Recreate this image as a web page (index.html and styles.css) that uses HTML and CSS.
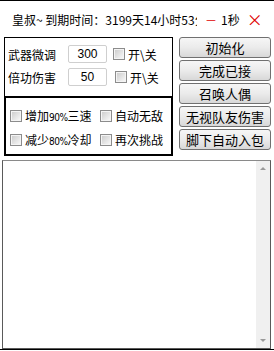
FILE: index.html
```html
<!DOCTYPE html>
<html lang="zh-CN">
<head>
    <meta charset="UTF-8">
    <title>皇叔</title>
    <link rel="stylesheet" href="styles.css">
</head>
<body>
    <div class="window">
        <header class="title-bar">
            <div class="title-text">皇叔~ 到期时间：3199天14小时53分</div>
            <span class="minus">－</span>
            <span class="timer">1秒</span>
            <span class="close">×</span>
        </header>

        <main class="content">
            <div class="left-col">
                <!-- number settings -->
                <div class="group group-top">
                    <div class="set-row">
                        <span class="label">武器微调</span>
                        <input class="num" type="text" value="300">
                        <span class="check"></span>
                        <span class="check-text">开\关</span>
                    </div>
                    <div class="set-row">
                        <span class="label">倍功伤害</span>
                        <input class="num" type="text" value="50">
                        <span class="check shift"></span>
                        <span class="check-text">开\关</span>
                    </div>
                </div>

                <!-- toggles -->
                <div class="group group-bottom">
                    <div class="opt-row">
                        <label class="opt wide"><span class="check"></span><span>增加<span class="small">90%</span>三速</span></label>
                        <label class="opt"><span class="check"></span><span>自动无敌</span></label>
                    </div>
                    <div class="opt-row">
                        <label class="opt wide"><span class="check"></span><span>减少<span class="small">80%</span>冷却</span></label>
                        <label class="opt"><span class="check"></span><span>再次挑战</span></label>
                    </div>
                </div>
            </div>

            <div class="right-col">
                <button class="btn">初始化</button>
                <button class="btn">完成已接</button>
                <button class="btn">召唤人偶</button>
                <button class="btn">无视队友伤害</button>
                <button class="btn">脚下自动入包</button>
            </div>
        </main>

        <div class="log">
            <div class="log-text"></div>
            <div class="scroll">
                <span class="arrow up"></span>
                <span class="arrow down"></span>
            </div>
        </div>
    </div>
</body>
</html>
```

FILE: styles.css
```css
/* Global styles */
body {
    margin: 0;
    padding: 0;
    background: #fff;
    font-family: "Noto Sans CJK SC", "Liberation Sans", sans-serif;
    font-size: 12px;
    color: #000;
}

.window {
    width: 274px;
    height: 351px;
    box-sizing: border-box;
    border-top: 1px solid #000;
    position: relative;
    overflow: hidden;
}

/* Title bar */
.title-bar {
    display: flex;
    align-items: center;
    height: 36px;
    padding-left: 12px;
}

.title-text {
    width: 185px;
    white-space: nowrap;
    overflow: hidden;
}

.minus {
    color: #e00000;
    margin-left: 8px;
}

.timer {
    margin-left: 4px;
}

.close {
    color: #e00000;
    font-size: 16px;
    margin-left: 7px;
}

/* Main area */
.content {
    display: flex;
    padding-left: 4px;
    height: 121px;
}

.left-col {
    width: 169px;
}

.group {
    box-sizing: border-box;
    background: #fff;
}

.group-top {
    height: 60px;
    border: 1px solid #000;
    padding: 7px 0 0 3px;
    display: flex;
    flex-direction: column;
    gap: 5px;
}

.set-row {
    display: flex;
    align-items: center;
    height: 18px;
}

.label {
    width: 48px;
}

.num {
    width: 39px;
    height: 18px;
    box-sizing: border-box;
    margin: 0 0 0 12px;
    padding: 0;
    border: 1px solid #cfcfcf;
    border-radius: 2px;
    font-family: "Liberation Sans", sans-serif;
    font-size: 12px;
    text-align: center;
    color: #000;
}

.set-row .check {
    margin-left: 6px;
}

.set-row .check.shift {
    margin-left: 8px;
}

.check-text {
    margin-left: 3px;
}

.check {
    display: inline-block;
    width: 12px;
    height: 12px;
    box-sizing: border-box;
    border: 1px solid #8c8c8c;
    background: linear-gradient(135deg, #c9c9c9 0%, #ececec 70%, #fafafa 100%);
    box-shadow: inset 0 0 0 1px #f4f4f4;
    flex-shrink: 0;
}

.group-bottom {
    height: 59px;
    border: 2px solid #000;
    border-top: 1px solid #000;
    padding: 11px 0 0 4px;
    display: flex;
    flex-direction: column;
    gap: 11px;
}

.opt-row {
    display: flex;
    align-items: center;
    height: 13px;
}

.opt {
    display: flex;
    align-items: center;
    gap: 3px;
    white-space: nowrap;
}

.opt.wide {
    width: 90px;
}

.small {
    font-family: "DejaVu Sans Condensed", "Liberation Sans", sans-serif;
    font-size: 10px;
    letter-spacing: -0.5px;
}

/* Buttons */
.right-col {
    margin-left: 6px;
    display: flex;
    flex-direction: column;
    gap: 2px;
}

.btn {
    width: 92px;
    height: 21px;
    padding: 0;
    border: 1px solid #707070;
    border-radius: 3px;
    background: linear-gradient(#f6f6f6 0%, #ebebeb 50%, #d8d8d8 100%);
    font-family: "Noto Sans CJK SC", sans-serif;
    font-size: 13px;
    line-height: 19px;
    color: #000;
}

/* Log box */
.log {
    display: flex;
    margin: 2px 3px 0 2px;
    height: 189px;
    box-sizing: border-box;
    border: 1px solid #5a5a5a;
    border-top-color: #8a8a8a;
    background: #fff;
}

.log-text {
    flex: 1;
}

.scroll {
    width: 14px;
    background: #f0f0f0;
    display: flex;
    flex-direction: column;
    justify-content: space-between;
    align-items: center;
    padding: 6px 0;
}

.arrow {
    width: 0;
    height: 0;
    border-left: 3px solid transparent;
    border-right: 3px solid transparent;
}

.arrow.up {
    border-bottom: 3px solid #9a9a9a;
}

.arrow.down {
    border-top: 3px solid #9a9a9a;
}

.window::after {
    content: "";
    position: absolute;
    left: 0;
    right: 0;
    bottom: 1px;
    height: 1px;
    background: #000;
}
```
